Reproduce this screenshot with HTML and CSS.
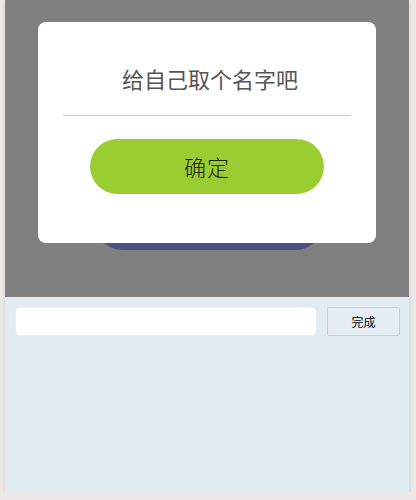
FILE: index.html
```html
<!DOCTYPE html>
<html lang="zh">
<head>
<meta charset="utf-8">
<link rel="stylesheet" href="styles.css">
</head>
<body>
<div class="frame">
  <div class="stage">
    <div class="under-btn"></div>
    <div class="dialog">
      <div class="dialog-title">给自己取个名字吧</div>
      <div class="divider"></div>
      <div class="ok-btn">确定</div>
    </div>
  </div>
  <div class="panel">
    <div class="name-input"></div>
    <div class="done-btn">完成</div>
  </div>
</div>
</body>
</html>
```
FILE: styles.css
```css
html, body {
  margin: 0;
  padding: 0;
  background: #ebe9e5;
  font-family: "Noto Sans CJK SC", "Noto Sans", sans-serif;
}
.frame {
  width: 404px;
  height: 492px;
  margin: 0 5px;
  box-shadow: 0 2px 4px rgba(0,0,0,0.12);
  display: flex;
  flex-direction: column;
}
.stage {
  position: relative;
  height: 297px;
  background: #808080;
  padding-top: 195px;
  box-sizing: border-box;
}
.under-btn {
  width: 228px;
  height: 55px;
  margin-left: 90px;
  border-radius: 28px;
  background: #4f4e85;
}
.dialog {
  position: absolute;
  left: 33px;
  top: 22px;
  width: 338px;
  height: 221px;
  background: #fff;
  border-radius: 8px;
  display: flex;
  flex-direction: column;
  align-items: center;
}
.dialog-title {
  margin-top: 41px;
  padding-left: 6px;
  height: 32px;
  line-height: 30px;
  font-size: 22px;
  font-weight: 400;
  color: #555;
}
.divider {
  margin-top: 20px;
  width: 288px;
  height: 1px;
  background: #c8c8c8;
}
.ok-btn {
  margin-top: 23px;
  width: 234px;
  height: 55px;
  border-radius: 28px;
  background: #9acd32;
  color: #1a2410;
  font-size: 22px;
  font-weight: 300;
  line-height: 55px;
  text-align: center;
  letter-spacing: 1px;
}
.panel {
  flex: 1;
  background: #e1ecf2;
  padding: 10px 9px 0 10px;
  display: flex;
  align-items: flex-start;
  gap: 10px;
}
.name-input {
  flex: 1;
  height: 29px;
  background: #fff;
  border-radius: 5px;
  border: 1px solid #e6eef2;
  box-sizing: border-box;
}
.done-btn {
  width: 73px;
  height: 29px;
  box-sizing: border-box;
  border: 1px solid #c4cfd6;
  border-radius: 2px;
  background: #e3edf3;
  font-size: 12px;
  line-height: 27px;
  text-align: center;
  color: #000;
}
```
